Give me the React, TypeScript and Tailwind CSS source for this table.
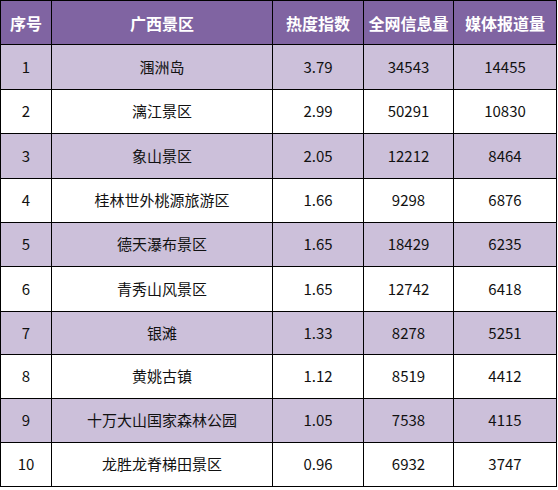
import React from "react";

const rows: [string, string, string, string, string][] = [
  ["1", "涠洲岛", "3.79", "34543", "14455"],
  ["2", "漓江景区", "2.99", "50291", "10830"],
  ["3", "象山景区", "2.05", "12212", "8464"],
  ["4", "桂林世外桃源旅游区", "1.66", "9298", "6876"],
  ["5", "德天瀑布景区", "1.65", "18429", "6235"],
  ["6", "青秀山风景区", "1.65", "12742", "6418"],
  ["7", "银滩", "1.33", "8278", "5251"],
  ["8", "黄姚古镇", "1.12", "8519", "4412"],
  ["9", "十万大山国家森林公园", "1.05", "7538", "4115"],
  ["10", "龙胜龙脊梯田景区", "0.96", "6932", "3747"],
];

const heights = [
  "h-[45px]",
  "h-[44px]",
  "h-[45px]",
  "h-[44px]",
  "h-[44px]",
  "h-[45px]",
  "h-[43px]",
  "h-[44px]",
  "h-[44px]",
  "h-[44px]",
];

const widths = ["w-[51px]", "w-[221px]", "w-[91px]", "w-[90px]", "w-[103px]"];

const headers = ["序号", "广西景区", "热度指数", "全网信息量", "媒体报道量"];

export default function App() {
  return (
    <div
      className="w-[558px] h-[490px] bg-white"
      style={{ fontFamily: '"Noto Sans CJK SC", "Noto Sans", sans-serif' }}
    >
      <div className="flex flex-col w-[557px] border-l border-t border-black">
        <div className="flex h-[44px] bg-[#8064a2]">
          {headers.map((h, i) => (
            <div
              key={h}
              className={`${widths[i]} shrink-0 flex items-center justify-center border-r border-b border-black text-white font-bold text-[16px]`}
            >
              {h}
            </div>
          ))}
        </div>
        {rows.map((r, ri) => (
          <div
            key={r[0]}
            className={`flex ${heights[ri]} ${ri % 2 === 0 ? "bg-[#ccc0da]" : "bg-white"}`}
          >
            {r.map((c, ci) => (
              <div
                key={ci}
                className={`${widths[ci]} shrink-0 flex items-center justify-center border-r border-b border-black text-[#111] text-[15px]`}
              >
                {c}
              </div>
            ))}
          </div>
        ))}
      </div>
    </div>
  );
}
